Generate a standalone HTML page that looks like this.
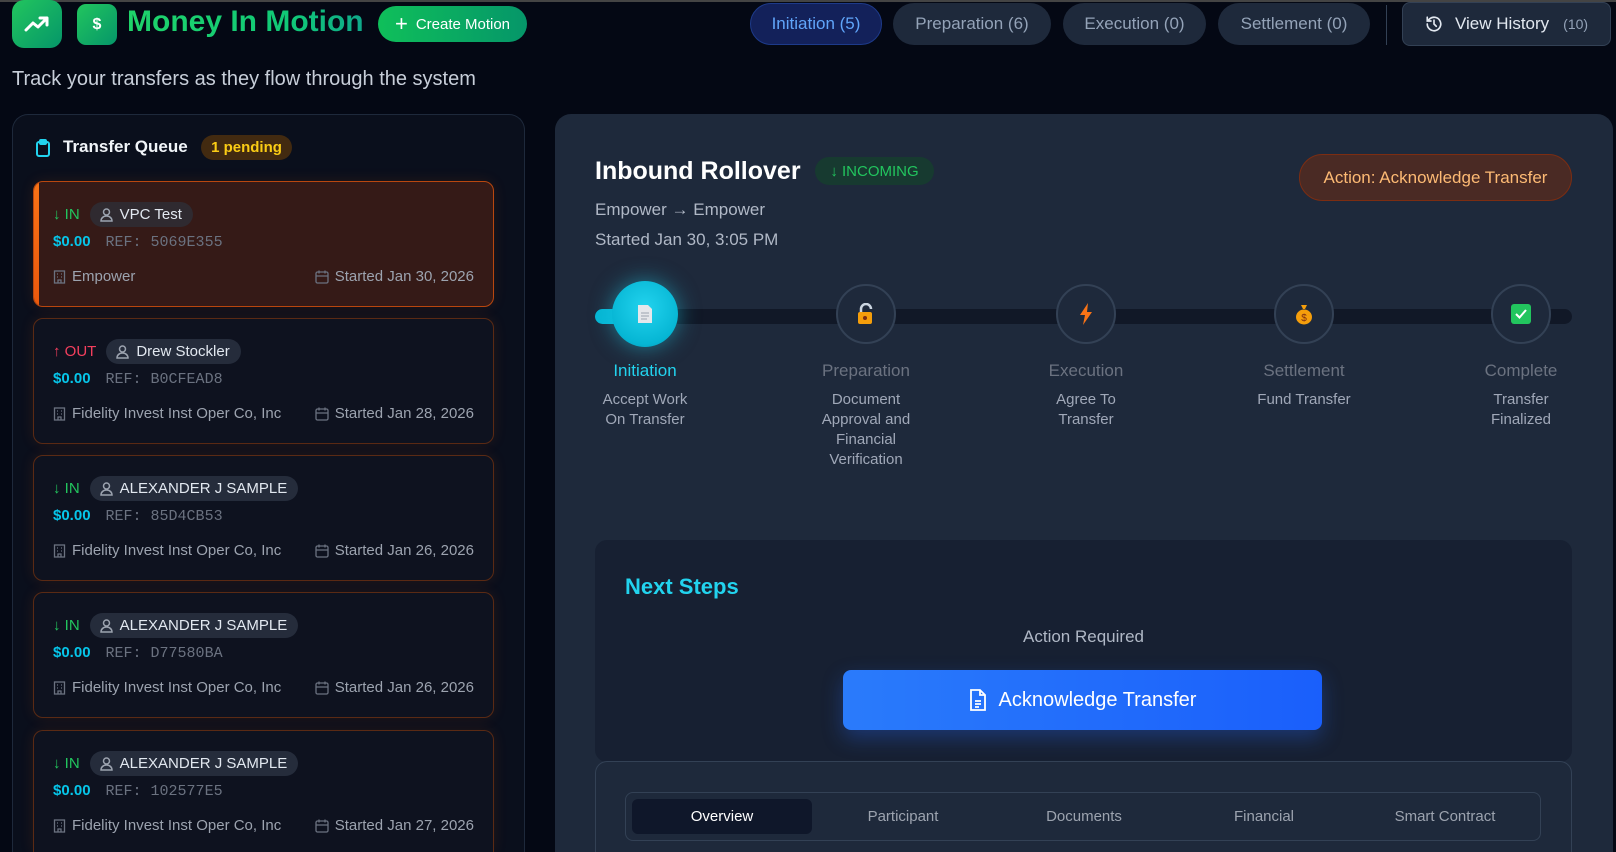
<!DOCTYPE html>
<html style="width:1616px;height:852px;overflow:hidden"><head><meta charset="utf-8"><style>
*{box-sizing:border-box;margin:0;padding:0}
body{width:1616px;height:852px;overflow:hidden;background:#040814;font-family:"Liberation Sans",sans-serif;position:relative;color:#e5e7eb}
.a{position:absolute}
.tab{position:absolute;top:3px;height:42px;border-radius:21px;background:#1e293b;color:#94a3b8;font-size:17px;display:flex;align-items:center;justify-content:center}
.card{position:absolute;left:33px;width:461px;height:126px;border:1px solid #5a2a14;border-radius:10px;background:#0e121f;box-shadow:0 0 14px rgba(234,88,12,.12)}
.card .r1{position:absolute;left:19px;top:20px;display:flex;align-items:center;font-size:15px}
.dir{margin-right:10px}
.pill{background:#252c3b;border-radius:13px;height:25px;padding:0 11px 0 10px;display:flex;align-items:center;color:#e2e8f0;font-size:15px}
.pill svg{margin-right:7px}
.card .r2{position:absolute;left:19px;top:51px;font-size:15px}
.amt{color:#06c6ea;font-weight:bold;margin-right:15px}
.ref{font-family:"Liberation Mono",monospace;color:#6b7280;font-size:15px}
.card .r3{position:absolute;left:19px;right:19px;top:86px;display:flex;justify-content:space-between;color:#9ca3af;font-size:15px}
.r3 span{display:flex;align-items:center}
.r3 svg{margin-right:6px}
.step{position:absolute;top:284px;width:60px;height:60px;border-radius:50%;border:2px solid #334155;background:#1e293b;display:flex;align-items:center;justify-content:center}
.sl{position:absolute;top:361px;width:180px;text-align:center;color:#6b7280;font-size:17px}
.sd{position:absolute;top:390px;width:110px;text-align:center;color:#a0a8b8;font-size:15px;line-height:20px}
</style></head><body>
<div class="a" style="left:0;top:0;width:1616px;height:2px;background:#444"></div>
<div class="a" style="left:12px;top:0;width:50px;height:48px;border-radius:12px;background:linear-gradient(135deg,#22c55e,#059669);display:flex;align-items:center;justify-content:center">
<svg width="26" height="20" viewBox="0 0 26 20"><path d="M2 16 L9 9 L14 13 L23 4 M16 4 H23 V11" stroke="#fff" stroke-width="3" fill="none" stroke-linecap="round" stroke-linejoin="round"/></svg></div>
<div class="a" style="left:77px;top:4px;width:40px;height:41px;border-radius:9px;background:linear-gradient(135deg,#22c55e,#059669);color:#fff;font-weight:bold;font-size:16px;display:flex;align-items:center;justify-content:center">$</div>
<div class="a" style="left:127px;top:5px;font-size:30px;font-weight:bold;color:#10d26a;background:linear-gradient(90deg,#1fd46a,#10c878 70%,#0fa88a);-webkit-background-clip:text;-webkit-text-fill-color:transparent">Money In Motion</div>
<div class="a" style="left:378px;top:6px;width:149px;height:36px;border-radius:18px;background:linear-gradient(90deg,#0fbf5a,#059669);color:#fff;font-size:15px;display:flex;align-items:center;justify-content:center"><span style="font-size:22px;margin-right:8px;font-weight:300">+</span>Create Motion</div>
<div class="a" style="left:12px;top:68px;font-size:20px;color:#c7ced9">Track your transfers as they flow through the system</div>

<div class="tab" style="left:750px;width:132px;background:#13215a;border:1px solid #1d3a8a;color:#60a5fa">Initiation (5)</div>
<div class="tab" style="left:893px;width:158px">Preparation (6)</div>
<div class="tab" style="left:1063px;width:143px">Execution (0)</div>
<div class="tab" style="left:1218px;width:152px">Settlement (0)</div>
<div class="a" style="left:1386px;top:5px;width:1px;height:40px;background:#334155"></div>
<div class="a" style="left:1402px;top:2px;width:209px;height:44px;border-radius:8px;background:#1e293b;border:1px solid #334155;display:flex;align-items:center;color:#e2e8f0;font-size:17px">
<svg style="margin:0 12px 0 22px" width="18" height="18" viewBox="0 0 24 24" fill="none" stroke="#e2e8f0" stroke-width="2.2" stroke-linecap="round"><path d="M3 12a9 9 0 1 0 3-6.7L3 8M3 3v5h5M12 7v5l3 3"/></svg>View History<span style="color:#94a3b8;font-size:14px;margin-left:14px">(10)</span></div>

<!-- left panel -->
<div class="a" style="left:12px;top:114px;width:513px;height:738px;border:1px solid #1e293b;border-bottom:none;border-radius:16px 16px 0 0;background:#0a0f1c"></div>
<svg class="a" style="left:35px;top:139px" width="16" height="18" viewBox="0 0 16 18" fill="none" stroke="#22d3ee" stroke-width="2"><rect x="2" y="3" width="12" height="14" rx="2"/><rect x="5" y="1" width="6" height="4" rx="1"/></svg>
<div class="a" style="left:63px;top:137px;font-size:17px;font-weight:bold;color:#f1f5f9">Transfer Queue</div>
<div class="a" style="left:201px;top:135px;width:91px;height:25px;border-radius:13px;background:#422a10;color:#facc15;font-weight:bold;font-size:15px;display:flex;align-items:center;justify-content:center">1 pending</div>

<div class="card" style="top:181px;height:126px;background:#351a17;border-color:#b9470f;overflow:hidden"><div class="a" style="left:0;top:0;width:5px;height:100%;background:linear-gradient(#f97316,#ea580c)"></div>
<div class="r1"><span class="dir" style="color:#22c55e">↓ IN</span><span class="pill" style="background:#2f2a30"><svg width="13" height="14" viewBox="0 0 13 14" fill="none" stroke="#9ca3af" stroke-width="1.5"><circle cx="6.5" cy="4" r="3"/><path d="M1 13c0-3 2.5-5 5.5-5s5.5 2 5.5 5z"/></svg>VPC Test</span></div>
<div class="r2"><span class="amt">$0.00</span><span class="ref">REF: 5069E355</span></div>
<div class="r3"><span><svg width="13" height="14" viewBox="0 0 13 14" fill="none" stroke="#6b7280" stroke-width="1.3"><rect x="1.5" y="1" width="10" height="12"/><path d="M4 4h1M8 4h1M4 7h1M8 7h1M5 13v-3h3v3"/></svg>Empower</span><span><svg width="14" height="14" viewBox="0 0 14 14" fill="none" stroke="#6b7280" stroke-width="1.3"><rect x="1" y="2" width="12" height="11" rx="1.5"/><path d="M1 6h12M4 0.5v3M10 0.5v3"/></svg>Started Jan 30, 2026</span></div></div>

<div class="card" style="top:318px"><div class="r1"><span class="dir" style="color:#f43f5e">↑ OUT</span><span class="pill"><svg width="13" height="14" viewBox="0 0 13 14" fill="none" stroke="#9ca3af" stroke-width="1.5"><circle cx="6.5" cy="4" r="3"/><path d="M1 13c0-3 2.5-5 5.5-5s5.5 2 5.5 5z"/></svg>Drew Stockler</span></div>
<div class="r2"><span class="amt">$0.00</span><span class="ref">REF: B0CFEAD8</span></div>
<div class="r3"><span><svg width="13" height="14" viewBox="0 0 13 14" fill="none" stroke="#6b7280" stroke-width="1.3"><rect x="1.5" y="1" width="10" height="12"/><path d="M4 4h1M8 4h1M4 7h1M8 7h1M5 13v-3h3v3"/></svg>Fidelity Invest Inst Oper Co, Inc</span><span><svg width="14" height="14" viewBox="0 0 14 14" fill="none" stroke="#6b7280" stroke-width="1.3"><rect x="1" y="2" width="12" height="11" rx="1.5"/><path d="M1 6h12M4 0.5v3M10 0.5v3"/></svg>Started Jan 28, 2026</span></div></div>

<div class="card" style="top:455px"><div class="r1"><span class="dir" style="color:#22c55e">↓ IN</span><span class="pill"><svg width="13" height="14" viewBox="0 0 13 14" fill="none" stroke="#9ca3af" stroke-width="1.5"><circle cx="6.5" cy="4" r="3"/><path d="M1 13c0-3 2.5-5 5.5-5s5.5 2 5.5 5z"/></svg>ALEXANDER J SAMPLE</span></div>
<div class="r2"><span class="amt">$0.00</span><span class="ref">REF: 85D4CB53</span></div>
<div class="r3"><span><svg width="13" height="14" viewBox="0 0 13 14" fill="none" stroke="#6b7280" stroke-width="1.3"><rect x="1.5" y="1" width="10" height="12"/><path d="M4 4h1M8 4h1M4 7h1M8 7h1M5 13v-3h3v3"/></svg>Fidelity Invest Inst Oper Co, Inc</span><span><svg width="14" height="14" viewBox="0 0 14 14" fill="none" stroke="#6b7280" stroke-width="1.3"><rect x="1" y="2" width="12" height="11" rx="1.5"/><path d="M1 6h12M4 0.5v3M10 0.5v3"/></svg>Started Jan 26, 2026</span></div></div>

<div class="card" style="top:592px"><div class="r1"><span class="dir" style="color:#22c55e">↓ IN</span><span class="pill"><svg width="13" height="14" viewBox="0 0 13 14" fill="none" stroke="#9ca3af" stroke-width="1.5"><circle cx="6.5" cy="4" r="3"/><path d="M1 13c0-3 2.5-5 5.5-5s5.5 2 5.5 5z"/></svg>ALEXANDER J SAMPLE</span></div>
<div class="r2"><span class="amt">$0.00</span><span class="ref">REF: D77580BA</span></div>
<div class="r3"><span><svg width="13" height="14" viewBox="0 0 13 14" fill="none" stroke="#6b7280" stroke-width="1.3"><rect x="1.5" y="1" width="10" height="12"/><path d="M4 4h1M8 4h1M4 7h1M8 7h1M5 13v-3h3v3"/></svg>Fidelity Invest Inst Oper Co, Inc</span><span><svg width="14" height="14" viewBox="0 0 14 14" fill="none" stroke="#6b7280" stroke-width="1.3"><rect x="1" y="2" width="12" height="11" rx="1.5"/><path d="M1 6h12M4 0.5v3M10 0.5v3"/></svg>Started Jan 26, 2026</span></div></div>

<div class="card" style="top:730px;height:122px;border-bottom:none;border-radius:10px 10px 0 0"><div class="r1"><span class="dir" style="color:#22c55e">↓ IN</span><span class="pill"><svg width="13" height="14" viewBox="0 0 13 14" fill="none" stroke="#9ca3af" stroke-width="1.5"><circle cx="6.5" cy="4" r="3"/><path d="M1 13c0-3 2.5-5 5.5-5s5.5 2 5.5 5z"/></svg>ALEXANDER J SAMPLE</span></div>
<div class="r2"><span class="amt">$0.00</span><span class="ref">REF: 102577E5</span></div>
<div class="r3"><span><svg width="13" height="14" viewBox="0 0 13 14" fill="none" stroke="#6b7280" stroke-width="1.3"><rect x="1.5" y="1" width="10" height="12"/><path d="M4 4h1M8 4h1M4 7h1M8 7h1M5 13v-3h3v3"/></svg>Fidelity Invest Inst Oper Co, Inc</span><span><svg width="14" height="14" viewBox="0 0 14 14" fill="none" stroke="#6b7280" stroke-width="1.3"><rect x="1" y="2" width="12" height="11" rx="1.5"/><path d="M1 6h12M4 0.5v3M10 0.5v3"/></svg>Started Jan 27, 2026</span></div></div>

<!-- right panel -->
<div class="a" style="left:555px;top:114px;width:1058px;height:738px;border-radius:16px 16px 0 0;background:#1e293b"></div>
<div class="a" style="left:595px;top:157px;font-size:25px;font-weight:bold;color:#fff">Inbound Rollover</div>
<div class="a" style="left:815px;top:157px;width:119px;height:28px;border-radius:14px;background:#173a30;color:#22c55e;font-size:15px;display:flex;align-items:center;justify-content:center">↓ INCOMING</div>
<div class="a" style="left:1299px;top:154px;width:273px;height:47px;border-radius:24px;background:#4a2a24;border:1px solid #7c2d12;color:#fdba74;font-size:17px;display:flex;align-items:center;justify-content:center">Action: Acknowledge Transfer</div>
<div class="a" style="left:595px;top:200px;font-size:17px;color:#b0b8c6">Empower → Empower</div>
<div class="a" style="left:595px;top:230px;font-size:17px;color:#b0b8c6">Started Jan 30, 3:05 PM</div>

<div class="a" style="left:595px;top:309px;width:977px;height:15px;border-radius:8px;background:#111827"></div>
<div class="a" style="left:595px;top:309px;width:50px;height:15px;border-radius:8px;background:#06b6d4"></div>
<div class="a" style="left:612px;top:281px;width:66px;height:66px;border-radius:50%;background:radial-gradient(circle at 50% 40%,#22d3ee,#06b6d4 70%,#0891b2);box-shadow:0 0 22px rgba(34,211,238,.5);display:flex;align-items:center;justify-content:center">
<svg width="16" height="20" viewBox="0 0 16 20"><path d="M1 1h10l4 4v14H1z" fill="#e5e7eb"/><path d="M4 9h8M4 12h8M4 15h6" stroke="#9ca3af"/></svg></div>
<div class="step" style="left:836px"><svg width="20" height="22" viewBox="0 0 20 22"><path d="M5 10V6a5 5 0 0 1 10 0" stroke="#cbd5e1" stroke-width="2.5" fill="none"/><rect x="2" y="9" width="14" height="12" rx="2" fill="#f59e0b"/><circle cx="9" cy="15" r="2" fill="#7c2d12"/></svg></div>
<div class="step" style="left:1056px"><svg width="14" height="22" viewBox="0 0 14 22"><path d="M9 0L1 12h5l-2 10 9-13H8z" fill="#f97316"/></svg></div>
<div class="step" style="left:1274px"><svg width="18" height="22" viewBox="0 0 18 22"><path d="M6 2h6l-2 4h-2z" fill="#f59e0b"/><ellipse cx="9" cy="14" rx="8" ry="7.5" fill="#f59e0b"/><text x="9" y="18" font-size="10" text-anchor="middle" fill="#7c2d12" font-family="Liberation Sans">$</text></svg></div>
<div class="step" style="left:1491px"><svg width="20" height="20" viewBox="0 0 20 20"><rect width="20" height="20" rx="3" fill="#22c55e"/><path d="M5 10l3.5 3.5L15 6" stroke="#fff" stroke-width="2" fill="none"/></svg></div>

<div class="sl" style="left:555px;color:#22d3ee">Initiation</div>
<div class="sl" style="left:776px">Preparation</div>
<div class="sl" style="left:996px">Execution</div>
<div class="sl" style="left:1214px">Settlement</div>
<div class="sl" style="left:1431px">Complete</div>
<div class="sd" style="left:590px">Accept Work<br>On Transfer</div>
<div class="sd" style="left:811px">Document<br>Approval and<br>Financial<br>Verification</div>
<div class="sd" style="left:1031px">Agree To<br>Transfer</div>
<div class="sd" style="left:1234px;width:140px">Fund Transfer</div>
<div class="sd" style="left:1466px">Transfer<br>Finalized</div>

<div class="a" style="left:595px;top:540px;width:977px;height:222px;border-radius:12px;background:#172032"></div>
<div class="a" style="left:625px;top:574px;font-size:22px;font-weight:bold;color:#22d3ee">Next Steps</div>
<div class="a" style="left:595px;top:627px;width:977px;text-align:center;font-size:17px;color:#b0b8c6">Action Required</div>
<div class="a" style="left:843px;top:670px;width:479px;height:60px;border-radius:8px;background:linear-gradient(90deg,#2a7bfb,#1a5ffb);box-shadow:0 8px 20px rgba(37,99,235,.35);display:flex;align-items:center;justify-content:center;color:#fff;font-size:20px">
<svg style="margin-right:12px" width="18" height="22" viewBox="0 0 18 22" fill="none" stroke="#fff" stroke-width="1.8"><path d="M2 1h9l5 5v15H2z"/><path d="M11 1v5h5M6 12h6M6 15h6M6 18h4"/></svg>Acknowledge Transfer</div>

<div class="a" style="left:595px;top:761px;width:977px;height:91px;border-radius:12px 12px 0 0;border:1px solid #334155;border-bottom:none;background:#1e293b"></div>
<div class="a" style="left:625px;top:792px;width:916px;height:49px;border-radius:8px;border:1px solid #334155;background:#1e293b"></div>
<div class="a" style="left:632px;top:799px;width:180px;height:35px;border-radius:6px;background:#0f172a"></div>
<div class="a" style="left:632px;top:808px;width:180px;text-align:center;color:#fff;font-size:15px">Overview</div>
<div class="a" style="left:813px;top:808px;width:180px;text-align:center;color:#9ca3af;font-size:15px">Participant</div>
<div class="a" style="left:994px;top:808px;width:180px;text-align:center;color:#9ca3af;font-size:15px">Documents</div>
<div class="a" style="left:1174px;top:808px;width:180px;text-align:center;color:#9ca3af;font-size:15px">Financial</div>
<div class="a" style="left:1355px;top:808px;width:180px;text-align:center;color:#9ca3af;font-size:15px">Smart Contract</div>
</body></html>
